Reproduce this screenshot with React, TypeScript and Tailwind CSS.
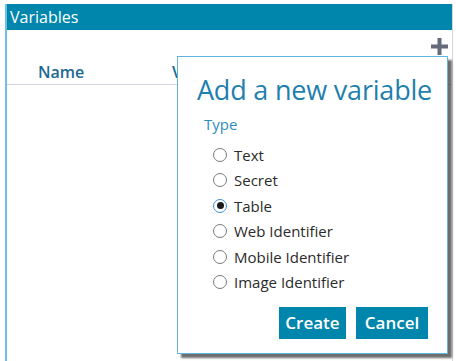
const types = ["Text", "Secret", "Table", "Web Identifier", "Mobile Identifier", "Image Identifier"];

const Radio = ({ checked }: { checked: boolean }) => (
  <span
    className={`flex h-[14px] w-[14px] items-center justify-center rounded-full border ${
      checked ? "border-[#3d8fd6]" : "border-[#7a7a7a]"
    } bg-white`}
  >
    {checked && <span className="h-[7px] w-[7px] rounded-full bg-[#1a1a1a]" />}
  </span>
);

const PlusIcon = () => (
  <svg width="17" height="17" viewBox="0 0 17 17" className="text-[#666b7a]">
    <rect x="6.5" y="0" width="4" height="17" fill="currentColor" />
    <rect x="0" y="6.5" width="17" height="4" fill="currentColor" />
  </svg>
);

const AddVariableDialog = () => {
  return (
    <div className="absolute left-[177px] top-[56px] w-[271px] border border-[#5cb6e0] bg-white pl-[19px] pr-[19px] pb-[14px] pt-[15px] shadow-[4px_4px_2px_rgba(60,60,60,0.75)]">
      <h2 className="whitespace-nowrap text-[27px] leading-[36px] tracking-[-0.2px] text-[#1f7fae]">Add a new variable</h2>
      <p className="mt-[6px] pl-[7px] text-[15px] leading-[20px] text-[#2e8dbd]">Type</p>
      <div className="mt-[8px] flex flex-col pl-[16px]">
        {types.map((t) => (
          <label key={t} className="flex h-[25.5px] items-center gap-[7px] text-[15px] text-[#2b2b2b]">
            <Radio checked={t === "Table"} />
            {t}
          </label>
        ))}
      </div>
      <div className="mt-[12px] flex justify-end gap-[10px]">
        <button className="h-[32px] w-[67px] bg-[#0086ad] text-[17px] font-semibold text-white">Create</button>
        <button className="h-[32px] w-[72px] bg-[#0086ad] text-[17px] font-semibold text-white">Cancel</button>
      </div>
    </div>
  );
};

export default function App() {
  return (
    <div className="relative h-[361px] w-[456px] bg-white font-['Open_Sans',sans-serif]">
      <div className="ml-[5px] mr-[3px] pt-[4px] h-full">
        <div className="flex h-full flex-col border-l-2 border-r border-l-[#6cc0e6] border-r-[#d6d6d6]">
          <div className="flex h-[26px] items-center bg-[#0086ad] pl-[3px] text-[16px] text-white">Variables</div>
          <div className="flex justify-end pr-[4px] pt-[8px]">
            <PlusIcon />
          </div>
          <div className="flex h-[30px] items-center border-b border-[#d8d6e6] pt-[4px] text-[16px] font-semibold text-[#1c6a92]">
            <span className="ml-[31px] w-[134px]">Name</span>
            <span>Value</span>
          </div>
        </div>
      </div>
      <AddVariableDialog />
    </div>
  );
}
